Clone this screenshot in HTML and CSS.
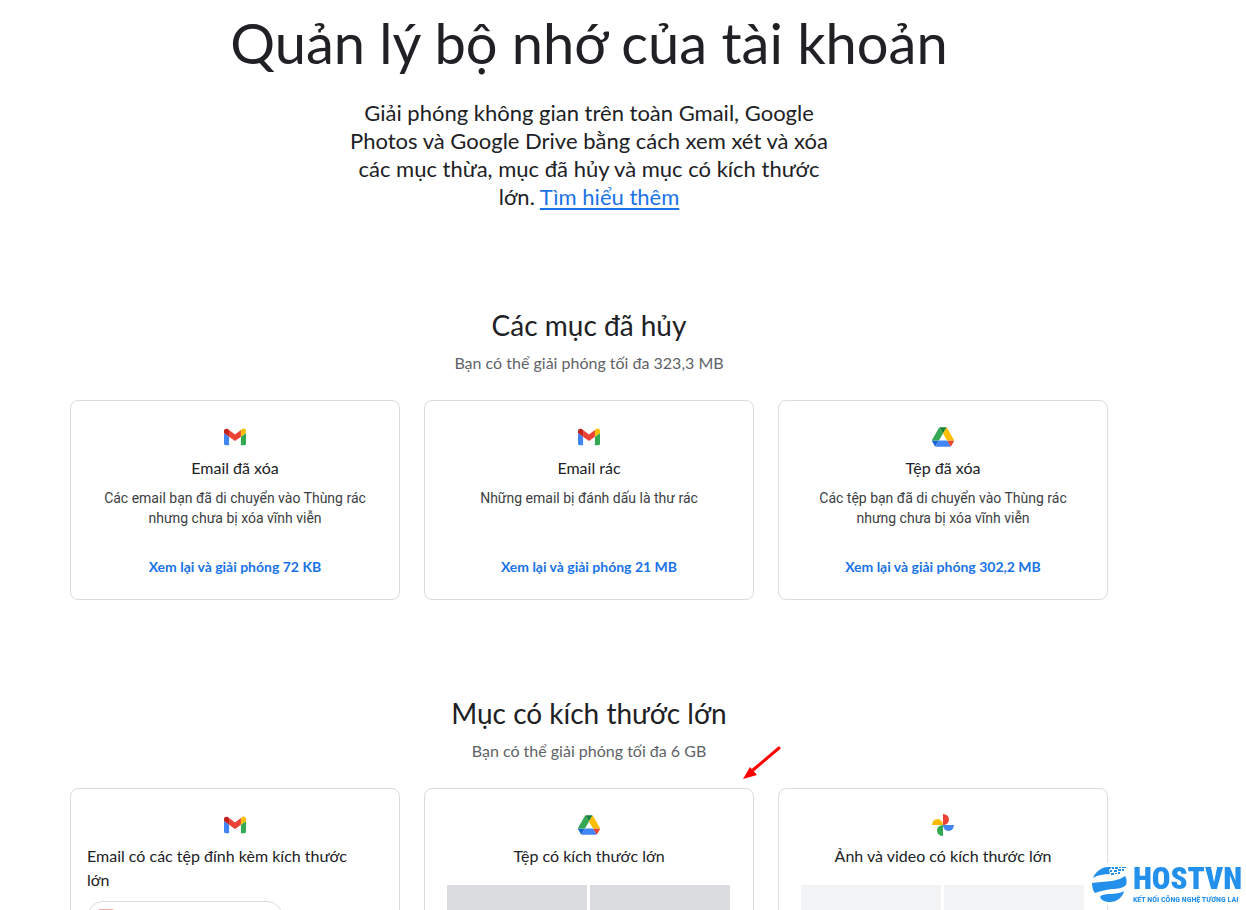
FILE: index.html
```html
<!DOCTYPE html>
<html lang="vi">
<head>
<meta charset="utf-8">
<meta name="viewport" content="width=device-width, initial-scale=1">
<title>Quản lý bộ nhớ của tài khoản</title>
<link rel="stylesheet" href="styles.css">
</head>
<body>
<svg class="defs" aria-hidden="true">
  <symbol id="gmail" viewBox="0 0 24 24">
    <path fill="#4285f4" d="M2.600 20.200H6.100V11.700L1 7.900V18.600c0 .9.700 1.600 1.600 1.600z"/>
    <path fill="#34a853" d="M17.900 20.200h3.500c.9 0 1.600-.7 1.600-1.600V7.900l-5.100 3.800z"/>
    <path fill="#fbbc04" d="M17.900 5.100v6.600L23 7.900V5.900c0-1.900-2.200-3-3.700-1.800z"/>
    <path fill="#ea4335" d="M6.100 11.700V5.100L12 9.500l5.900-4.400v6.600L12 16.100z"/>
    <path fill="#c5221f" d="M1 5.900v2l5.100 3.800V5.100L4.700 4.100C3.200 3 1 4 1 5.900z"/>
  </symbol>
  <symbol id="drive" viewBox="0 0 87.300 78">
    <path fill="#1967d2" d="M6.600 66.850l3.850 6.650c.8 1.400 1.950 2.500 3.300 3.300L27.500 53H0c0 1.550.4 3.100 1.200 4.500z"/>
    <path fill="#34a853" d="M43.650 25L29.900 1.200c-1.350.8-2.500 1.900-3.300 3.300L1.200 48.500A9.060 9.060 0 0 0 0 53h27.500z"/>
    <path fill="#ea4335" d="M73.550 76.800c1.350-.8 2.500-1.900 3.300-3.300l1.600-2.750L86.100 57.500c.8-1.400 1.200-2.950 1.200-4.500H59.800l5.850 11.500z"/>
    <path fill="#188038" d="M43.650 25L57.400 1.200C56.050.4 54.500 0 52.900 0H34.400c-1.600 0-3.150.45-4.500 1.200z"/>
    <path fill="#4285f4" d="M59.800 53H27.500L13.750 76.800c1.350.8 2.900 1.200 4.500 1.200h50.800c1.600 0 3.150-.45 4.500-1.200z"/>
    <path fill="#fbbc04" d="M73.400 26.500l-12.700-22c-.8-1.400-1.950-2.500-3.300-3.300L43.650 25 59.800 53h27.450c0-1.550-.4-3.100-1.200-4.500z"/>
  </symbol>
  <symbol id="photos" viewBox="0 0 24 24">
    <path fill="#ea4335" d="M12 1a6 5.500 0 0 1 0 11z"/>
    <path fill="#4285f4" d="M23 12a5.500 6 0 0 1-11 0z"/>
    <path fill="#34a853" d="M12 23a6 5.500 0 0 1 0-11z"/>
    <path fill="#fbbc04" d="M1 12a5.500 6 0 0 1 11 0z"/>
  </symbol>
</svg>

<main class="page">
  <header class="intro">
    <h1 class="intro-title">Quản lý bộ nhớ của tài khoản</h1>
    <p class="intro-text">Giải phóng không gian trên toàn Gmail, Google<br>Photos và Google Drive bằng cách xem xét và xóa<br>các mục thừa, mục đã hủy và mục có kích thước<br>lớn. <a class="intro-link" href="#">Tìm hiểu thêm</a></p>
  </header>

  <section class="section">
    <h2 class="section-title">Các mục đã hủy</h2>
    <p class="section-note">Bạn có thể giải phóng tối đa 323,3 MB</p>
    <div class="cards">
      <article class="card">
        <svg class="icon" aria-hidden="true"><use href="#gmail"/></svg>
        <h3 class="card-title">Email đã xóa</h3>
        <p class="card-text">Các email bạn đã di chuyển vào Thùng rác nhưng chưa bị xóa vĩnh viễn</p>
        <a class="card-link" href="#">Xem lại và giải phóng 72 KB</a>
      </article>
      <article class="card">
        <svg class="icon" aria-hidden="true"><use href="#gmail"/></svg>
        <h3 class="card-title">Email rác</h3>
        <p class="card-text">Những email bị đánh dấu là thư rác</p>
        <a class="card-link" href="#">Xem lại và giải phóng 21 MB</a>
      </article>
      <article class="card">
        <svg class="icon icon-drive" aria-hidden="true"><use href="#drive"/></svg>
        <h3 class="card-title">Tệp đã xóa</h3>
        <p class="card-text">Các tệp bạn đã di chuyển vào Thùng rác nhưng chưa bị xóa vĩnh viễn</p>
        <a class="card-link" href="#">Xem lại và giải phóng 302,2 MB</a>
      </article>
    </div>
  </section>

  <section class="section">
    <h2 class="section-title">Mục có kích thước lớn</h2>
    <p class="section-note">Bạn có thể giải phóng tối đa 6 GB</p>
    <div class="cards">
      <article class="card card-large">
        <svg class="icon" aria-hidden="true"><use href="#gmail"/></svg>
        <h3 class="card-title card-title-left">Email có các tệp đính kèm kích thước lớn</h3>
        <div class="chip"><span class="chip-icon"></span></div>
      </article>
      <article class="card card-large">
        <svg class="icon icon-drive" aria-hidden="true"><use href="#drive"/></svg>
        <h3 class="card-title">Tệp có kích thước lớn</h3>
        <div class="thumbs"><span class="thumb"></span><span class="thumb"></span></div>
        <svg class="arrow" viewBox="0 0 40 36" aria-hidden="true">
          <path d="M38 3L12 25" stroke="#f00" stroke-width="3" stroke-linecap="round"/>
          <path d="M2 34L9 22l7 8z" fill="#f00"/>
        </svg>
      </article>
      <article class="card card-large">
        <svg class="icon" aria-hidden="true"><use href="#photos"/></svg>
        <h3 class="card-title">Ảnh và video có kích thước lớn</h3>
        <div class="thumbs thumbs-light"><span class="thumb"></span><span class="thumb"></span></div>
      </article>
    </div>
  </section>
</main>

<aside class="brand">
  <svg class="brand-mark" viewBox="0 0 36 38" aria-hidden="true" fill="#2390ec">
    <path d="M1 13C4 6 10 2 16 2h4l-3 3 1 4C12 9 6 10 1 13z"/>
    <path d="M20 2h2v2h-2zM23 2h3v2h-3zM27 2h2v1h-2zM30 2h4v1h-4zM18 5h2v2h-2zM22 5h3v2h-3zM26 4h3v2h-3zM30 4h2v2h-2zM19 8h3v2h-3zM23 8h2v1h-2zM26 7h2v2h-2z"/>
    <path d="M0 18c5-1 13-1 20-2 6-1 10-3 13-5 2 3 2 6 1 9-3 3-8 4-14 4-7 1-12 2-17 4-2-2-3-6-3-10z"/>
    <path d="M8 32c2-3 7-3 12-3 5-1 9-1 12-3-1 6-7 11-14 11-5 0-9-2-10-5z"/>
  </svg>
  <div class="brand-words">
    <strong class="brand-name">HOSTVN</strong>
    <span class="brand-line">KẾT NỐI CÔNG NGHỆ TƯƠNG LAI</span>
  </div>
</aside>
</body>
</html>
```
FILE: styles.css
```css
* { box-sizing: border-box; }

body {
  margin: 0;
  background: #fff;
  color: #202124;
  font-family: Lato, sans-serif;
  overflow: hidden;
}

h1, h2, h3, p { margin: 0; font-weight: 400; }

.defs { position: absolute; width: 0; height: 0; }

.page {
  height: 100vh;
  overflow: hidden;
  padding: 11px 138px 0 70px;
  text-align: center;
}

.intro { padding-bottom: 1px; }
.intro-title { font-size: 56px; line-height: 64px; }
.intro-text { margin-top: 24px; font-size: 22px; line-height: 28px; }
.intro-link { color: #1a73e8; text-underline-offset: 3px; }

.section { padding-top: 95px; }
.section-title { font-size: 28px; line-height: 36px; }
.section-note {
  margin-top: 8px;
  color: #5f6368;
  font-size: 16px;
  line-height: 24px;
}

.cards {
  display: grid;
  grid-template-columns: repeat(3, 1fr);
  gap: 24px;
  margin-top: 25px;
}

.card {
  position: relative;
  display: flex;
  flex-direction: column;
  align-items: center;
  min-height: 200px;
  padding: 24px 16px 20px;
  border: 1px solid #dadce0;
  border-radius: 8px;
}

.card-large { min-height: 320px; }

.icon { width: 24px; height: 24px; }
.icon-drive { padding: 2px 1px; }

.card-title { margin-top: 7px; font-size: 16px; line-height: 24px; }
.card-title-left { align-self: stretch; padding-right: 24px; text-align: left; }

.card-text {
  max-width: 280px;
  margin-top: 8px;
  color: #3c4043;
  font-family: Roboto, sans-serif;
  font-size: 14px;
  line-height: 20px;
}

.card-link {
  margin-top: auto;
  color: #1a73e8;
  font-size: 14px;
  font-weight: 700;
  line-height: 24px;
  text-decoration: none;
}

.thumbs {
  display: grid;
  grid-template-columns: 1fr 1fr;
  gap: 3px;
  align-self: stretch;
  margin-top: 17px;
  padding: 0 7px 0 6px;
}
.thumb { height: 140px; background: #dadce0; }
.thumbs-light .thumb { background: #f1f3f4; }

.chip {
  align-self: flex-start;
  width: 196px;
  height: 32px;
  margin-top: 9px;
  padding: 7px 10px;
  border: 1px solid #dadce0;
  border-radius: 16px;
}
.chip-icon { display: block; width: 16px; height: 16px; border-radius: 2px; background: #f4b0ab; }

.arrow {
  position: absolute;
  right: -28px;
  top: -44px;
  width: 40px;
  height: 36px;
  fill: none;
}

.brand {
  position: fixed;
  right: 4px;
  bottom: 5px;
  display: flex;
  align-items: center;
  gap: 5px;
  background: #fff;
  color: #2390ec;
  font-family: "Roboto Condensed", "Open Sans Condensed", Roboto, sans-serif;
  font-weight: 700;
}
.brand-mark { width: 36px; height: 38px; }
.brand-words { display: flex; flex-direction: column; }
.brand-name { font-size: 31px; line-height: 32px; }
.brand-line { font-size: 8px; line-height: 10px; white-space: nowrap; }
```
